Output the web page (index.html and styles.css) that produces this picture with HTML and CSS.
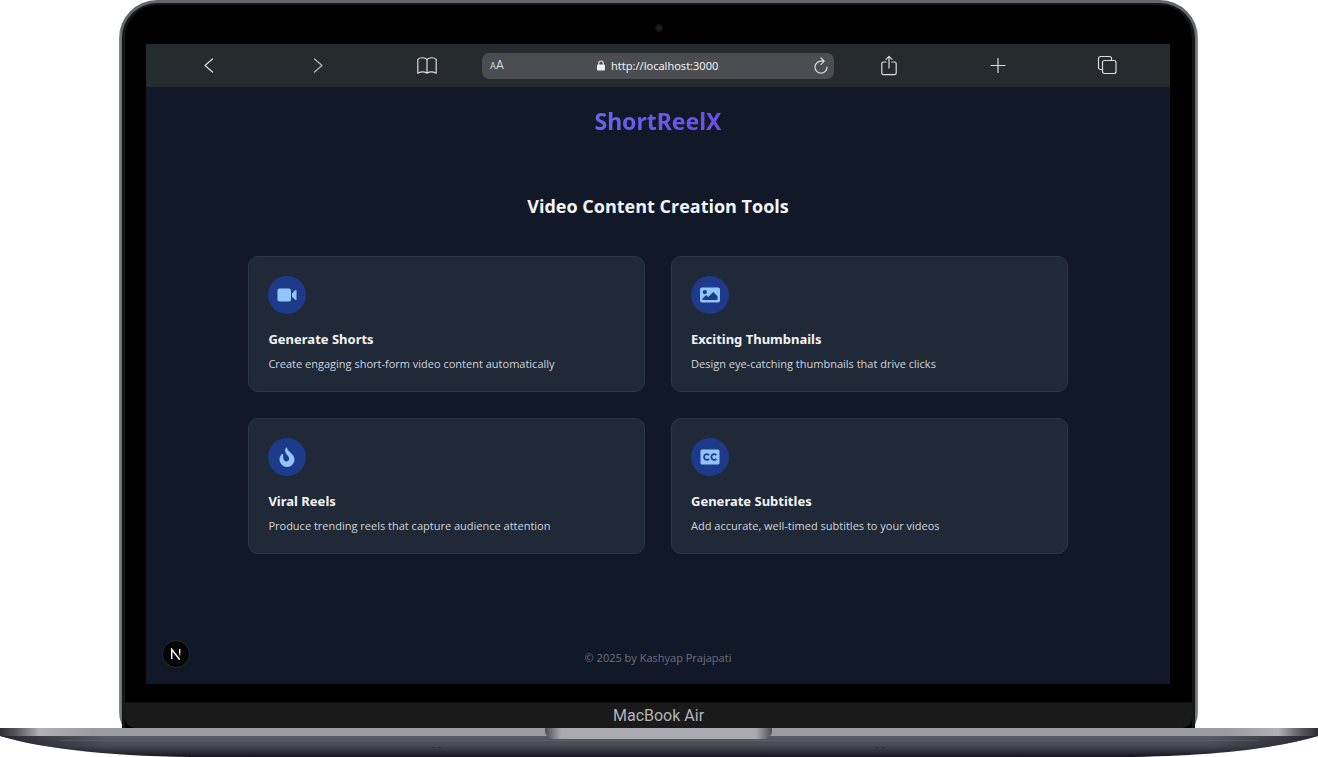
FILE: index.html
```html
<!DOCTYPE html>
<html lang="en">
<head>
<meta charset="utf-8">
<meta name="viewport" content="width=device-width, initial-scale=1">
<title>ShortReelX</title>
<link rel="stylesheet" href="styles.css">
</head>
<body>
<div class="laptop">
  <div class="lid">
    <div class="bezel">
      <div class="bezel-top"><span class="camera"></span></div>
      <div class="screen">
        <nav class="toolbar" aria-label="Browser">
          <button class="tool" type="button" aria-label="Back"><svg width="22" height="22" viewBox="0 0 22 22"><path d="M14.500 4 7 10.500l7.500 6.500"/></svg></button>
          <button class="tool" type="button" aria-label="Forward"><svg class="dim" width="22" height="22" viewBox="0 0 22 22"><path d="m7.500 4 7.500 6.500L7.500 17"/></svg></button>
          <button class="tool" type="button" aria-label="Bookmarks"><svg width="22" height="22" viewBox="0 0 22 22"><path d="M11 4.700C9.200 2.300 4 2.100 1.800 4.300v13.900c2.800-1.400 7-1.400 9.200 0 2.200-1.400 6.400-1.400 9.200 0V4.300C18 2.100 12.800 2.300 11 4.700zm0 0v13.500"/></svg></button>
          <div class="address">
            <button class="text-size" type="button" aria-label="Text size"><span class="small-a">A</span>A</button>
            <div class="location">
              <svg class="lock" width="8" height="11" viewBox="0 0 8 11"><rect x="0" y="4.500" width="8" height="6" rx="1"/><path d="M1.800 5V3.200a2.200 2.200 0 0 1 4.400 0V5"/></svg>
              <input class="url" type="text" aria-label="Address" value="http://localhost:3000">
            </div>
            <button class="reload" type="button" aria-label="Reload"><svg width="16" height="18" viewBox="0 0 16 18"><path d="M10.500 4.200H8a6 6 0 1 0 6 6M8 1l3.200 3.200L8 7.400"/></svg></button>
          </div>
          <button class="tool" type="button" aria-label="Share"><svg width="22" height="22" viewBox="0 0 22 22"><path d="M8 7H5.500a1.700 1.700 0 0 0-1.700 1.700v9.300c0 1 .7 1.700 1.700 1.700h11c1 0 1.700-.7 1.700-1.700V8.700c0-1-.7-1.700-1.700-1.700H14M11 13V1.500M8 4.300l3-3 3 3"/></svg></button>
          <button class="tool" type="button" aria-label="New tab"><svg width="22" height="22" viewBox="0 0 22 22"><path d="M11 3.500v14M4 10.500h14"/></svg></button>
          <button class="tool" type="button" aria-label="Tabs"><svg width="22" height="22" viewBox="0 0 22 22"><rect x="6.500" y="5.500" width="13.500" height="13" rx="2"/><path d="M6.500 14.500H4.500a2 2 0 0 1-2-2V3.500a2 2 0 0 1 2-2h9a2 2 0 0 1 2 2v2"/></svg></button>
        </nav>
        <div class="page">
          <header class="site-header"><h1 class="brand">ShortReelX</h1></header>
          <main class="main">
            <h2 class="heading">Video Content Creation Tools</h2>
            <div class="cards">
              <article class="card">
                <span class="icon"><svg width="20" height="20" viewBox="0 0 20 20"><rect x="0.500" y="3.500" width="13.500" height="13" rx="2"/><path d="M15 8.200 18.500 5q1-.4 1 .5v9q0 .9-1 .5L15 11.800z"/></svg></span>
                <h3 class="card-title">Generate Shorts</h3>
                <p class="card-text">Create engaging short-form video content automatically</p>
              </article>
              <article class="card">
                <span class="icon"><svg width="20" height="20" viewBox="0 0 20 20"><path fill-rule="evenodd" d="M2 2.500h16a2 2 0 0 1 2 2v11a2 2 0 0 1-2 2H2a2 2 0 0 1-2-2v-11a2 2 0 0 1 2-2zM4.800 5a2.100 2.100 0 1 0 0 4.200 2.100 2.100 0 0 0 0-4.200zM2.500 15h15v-3.800l-4.200-4.300-5.100 5.200-2.100-2-3.600 3.300z"/></svg></span>
                <h3 class="card-title">Exciting Thumbnails</h3>
                <p class="card-text">Design eye-catching thumbnails that drive clicks</p>
              </article>
              <article class="card">
                <span class="icon"><svg width="20" height="20" viewBox="0 0 20 20"><path d="M9.800.3c.4 4.500 7.700 6.500 7.700 12.200a7.500 7.500 0 0 1-15 0c0-2.500 1-4.400 2.600-5.500.6-.3 1 0 1 .6.100 2-.2 4.800 1.400 6.200 1.800 1.500 4.600.3 4.600-2.100 0-3.500-4.700-4.700-3.900-9.200.2-1 .6-1.700 1.600-2.200z"/></svg></span>
                <h3 class="card-title">Viral Reels</h3>
                <p class="card-text">Produce trending reels that capture audience attention</p>
              </article>
              <article class="card">
                <span class="icon"><svg width="20" height="20" viewBox="0 0 20 20"><rect x="0.500" y="2.500" width="19" height="15" rx="1.500"/><path class="cc" d="M9 8.200a2.800 2.800 0 1 0 0 3.600M16.300 8.200a2.800 2.800 0 1 0 0 3.600"/></svg></span>
                <h3 class="card-title">Generate Subtitles</h3>
                <p class="card-text">Add accurate, well-timed subtitles to your videos</p>
              </article>
            </div>
          </main>
          <footer class="footer">© 2025 by Kashyap Prajapati</footer>
          <button class="dev-badge" type="button" aria-label="Developer tools"><svg width="12" height="12" viewBox="0 0 12 12"><defs><linearGradient id="fade" x1="0" y1="0" x2="0" y2="1"><stop offset="0.400" stop-color="#fff"/><stop offset="1" stop-color="#fff" stop-opacity="0"/></linearGradient></defs><path d="M1.700 11V1.400L9.800 11.800" fill="none" stroke="#fff" stroke-width="1.500"/><rect x="9" y="1" width="1.400" height="8" fill="url(#fade)"/></svg></button>
        </div>
      </div>
      <div class="bezel-bottom"></div>
      <div class="chin">MacBook Air</div>
    </div>
  </div>
  <div class="base">
    <svg class="base-shape" viewBox="0 0 1318 29" preserveAspectRatio="none" aria-hidden="true">
      <defs>
        <linearGradient id="under" x1="0" y1="0" x2="0" y2="1"><stop offset="0.250" stop-color="#5d5e66"/><stop offset="0.600" stop-color="#484953"/><stop offset="0.850" stop-color="#2b2b36"/><stop offset="1" stop-color="#15131e"/></linearGradient>
        <linearGradient id="deck" x1="0" y1="0" x2="1" y2="0"><stop offset="0" stop-color="#2c2d35"/><stop offset="0.012" stop-color="#55565e"/><stop offset="0.030" stop-color="#b0b1b6"/><stop offset="0.070" stop-color="#9b9ca2"/><stop offset="0.930" stop-color="#9b9ca2"/><stop offset="0.970" stop-color="#b0b1b6"/><stop offset="0.988" stop-color="#55565e"/><stop offset="1" stop-color="#2c2d35"/></linearGradient>
        <linearGradient id="edge" x1="0" y1="0" x2="1" y2="0"><stop offset="0" stop-color="#20202a" stop-opacity="0.900"/><stop offset="0.080" stop-color="#20202a" stop-opacity="0"/><stop offset="0.920" stop-color="#20202a" stop-opacity="0"/><stop offset="1" stop-color="#20202a" stop-opacity="0.900"/></linearGradient>
      </defs>
      <path d="M0 0H1318V8C1270 22 1200 29 1110 29H208C118 29 48 22 0 8z" fill="url(#under)"/>
      <path d="M0 8H1318C1270 22 1200 29 1110 29H208C118 29 48 22 0 8z" fill="url(#edge)"/>
      <path d="M0 0H1318V8H0z" fill="url(#deck)"/>
      <path d="M60 12.500H1258" stroke="#6a6b73" stroke-opacity="0.400"/>
      <path d="M432 19.500h3m3 0h3M876 19.500h3m3 0h3" stroke="#30303a"/>
    </svg>
    <span class="notch"></span>
  </div>
</div>
</body>
</html>
```
FILE: styles.css
```css
* { box-sizing: border-box; }
body { margin: 0; background: #fff; font-family: "Open Sans", "Noto Sans", sans-serif; }
h1, h2, h3, p { margin: 0; }
button { border: 0; padding: 0; background: none; color: inherit; font: inherit; cursor: pointer; }

.laptop { display: flex; flex-direction: column; min-height: 100vh; }
.lid {
  flex: 1;
  display: flex;
  margin: 0 120px 0 119px;
  padding: 3px 3px 0;
  border-radius: 38px 38px 8px 8px / 38px 38px 16px 16px;
  background: linear-gradient(90deg, #8e8f96, #66676d 3px, #66676d calc(100% - 3px), #8e8f96);
}
.bezel {
  flex: 1;
  display: flex;
  flex-direction: column;
  border: solid #15171a;
  border-width: 2px 3px 0;
  border-radius: 35px 35px 0 0;
  background: #000;
}
.bezel-top { display: flex; justify-content: center; padding-top: 19px; height: 39px; }
.camera { width: 8px; height: 8px; border-radius: 50%; background: radial-gradient(#25282c, #111 60%, #0a0a0a); }
.screen { flex: 1; display: flex; flex-direction: column; margin: 0 22px 0 21px; }
.bezel-bottom { height: 18px; }
.chin {
  height: 26px;
  border-top: 1px solid #111;
  border-radius: 0 0 10px 10px;
  background: #1a1a1a;
  color: #b4b4b8;
  font: 16px/26px Roboto, sans-serif;
  text-align: center;
}

.toolbar {
  display: grid;
  grid-template-columns: repeat(3, 1fr) 352px repeat(3, 1fr);
  align-items: center;
  height: 43px;
  padding: 0 8px;
  background: #262b2e;
  color: #dcddde;
}
.tool { display: grid; place-items: center; }
.toolbar svg { fill: none; stroke: currentColor; stroke-width: 1.200; stroke-linecap: round; stroke-linejoin: round; }
.toolbar .dim { opacity: 0.800; }
.address {
  display: grid;
  grid-template-columns: 26px 1fr 26px;
  align-items: center;
  height: 26px;
  border-radius: 7px;
  background: #4b4d51;
}
.text-size { justify-self: start; padding-left: 8px; font: 12px/16px Roboto, sans-serif; white-space: nowrap; }
.small-a { font-size: 9px; }
.location { display: flex; justify-content: center; align-items: center; gap: 6px; padding-left: 4px; }
.location rect { fill: #f0f0f0; stroke: none; }
.url { width: 112px; padding: 0; border: 0; background: none; color: #f0f0f0; font: 11px/16px "Noto Sans", sans-serif; }
.reload { display: grid; place-items: center; }

.page { position: relative; flex: 1; display: flex; flex-direction: column; background: #111827; }
.site-header { padding: 16px 0; text-align: center; }
.brand {
  display: inline-block;
  font-family: "Noto Sans", sans-serif;
  font-size: 23px;
  line-height: 36px;
  background: linear-gradient(90deg, #6366f1, #6d4fe6);
  -webkit-background-clip: text;
  background-clip: text;
  color: transparent;
}
.main { flex: 1; width: 80%; margin: 0 auto; padding-top: 36px; }
.heading { color: #f3f4f6; font-size: 18px; line-height: 30px; text-align: center; }
.cards { display: grid; grid-template-columns: 1fr 1fr; gap: 26px; margin-top: 35px; }
.card { padding: 19px; border: 1px solid #2c3744; border-radius: 10px; background: #1f2937; }
.icon { display: grid; place-items: center; width: 38px; height: 38px; border-radius: 50%; background: #1e3a8a; }
.icon svg { fill: #93c5fd; }
.icon .cc { fill: none; stroke: #1e3a8a; stroke-width: 1.800; }
.card-title { margin-top: 14px; color: #f3f4f6; font-family: "Noto Sans", sans-serif; font-size: 13px; line-height: 22px; }
.card-text { margin-top: 6px; color: #d1d5db; font-size: 11px; line-height: 16px; }
.footer { padding: 16px 0; color: #6b7280; font-size: 11px; line-height: 20px; text-align: center; }
.dev-badge {
  position: absolute;
  left: 16px;
  bottom: 16px;
  display: grid;
  place-items: center;
  width: 28px;
  height: 28px;
  border: 1px solid #2a2a2a;
  border-radius: 50%;
  background: #050507;
}

.base { position: relative; height: 29px; }
.base-shape { display: block; width: 100%; height: 29px; }
.notch {
  position: absolute;
  top: 0;
  left: 50%;
  width: 227px;
  height: 11px;
  margin-left: -114px;
  border-radius: 0 0 8px 8px;
  background: linear-gradient(90deg, #4c4d55, #a9aab0 7%, #a9aab0 93%, #4c4d55);
}
```
